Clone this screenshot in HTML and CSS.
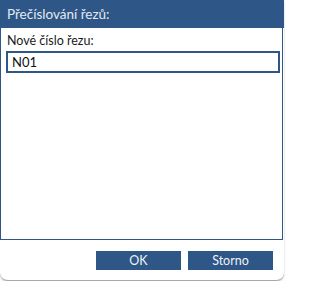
FILE: index.html
```html
<!DOCTYPE html>
<html lang="cs">
<head>
<meta charset="utf-8">
<link rel="stylesheet" href="styles.css">
</head>
<body>
<div class="window">
  <div class="titlebar">Přečíslování řezů:</div>
  <div class="panel">
    <label class="label" for="num">Nové číslo řezu:</label>
    <input id="num" class="field" type="text" value="N01">
  </div>
  <div class="footer">
    <button class="btn">OK</button>
    <button class="btn">Storno</button>
  </div>
</div>
</body>
</html>
```
FILE: styles.css
```css
html, body {
  margin: 0;
  padding: 0;
  background: #ffffff;
}
.window {
  width: 284px;
  height: 281px;
  box-sizing: border-box;
  background: #ffffff;
  border-bottom: 1px solid #a8a8a8;
  border-radius: 0 0 8px 8px;
  box-shadow: 0 1px 2px rgba(0,0,0,0.25);
  display: flex;
  flex-direction: column;
  font-family: "Lato", "Noto Sans", sans-serif;
  font-size: 12.5px;
  overflow: hidden;
}
.titlebar {
  height: 28px;
  flex: none;
  background: #2e5686;
  color: #e4eaf2;
  line-height: 28px;
  padding-left: 7px;
  font-size: 13.5px;
}
.panel {
  width: 283px;
  height: 212px;
  box-sizing: border-box;
  flex: none;
  border: 1px solid #2e5686;
  border-top: none;
  padding: 5px 4px 0 5px;
  display: flex;
  flex-direction: column;
}
.label {
  color: #1a1a1a;
  line-height: 16px;
  padding-left: 1px;
  margin-bottom: 2px;
}
.field {
  width: 274px;
  height: 22px;
  box-sizing: border-box;
  border: 2px solid #2e5686;
  margin: 0;
  padding: 0 0 0 4px;
  font-family: inherit;
  font-size: 13px;
  color: #111;
  outline: none;
}
.footer {
  flex: 1;
  display: flex;
  justify-content: flex-end;
  align-items: flex-start;
  gap: 7px;
  padding: 11px 11px 0 0;
}
.btn {
  width: 85px;
  height: 19px;
  border: none;
  margin: 0;
  padding: 0;
  background: #2e5686;
  color: #eef2f7;
  font-family: inherit;
  font-size: 12.5px;
  line-height: 19px;
}
```
